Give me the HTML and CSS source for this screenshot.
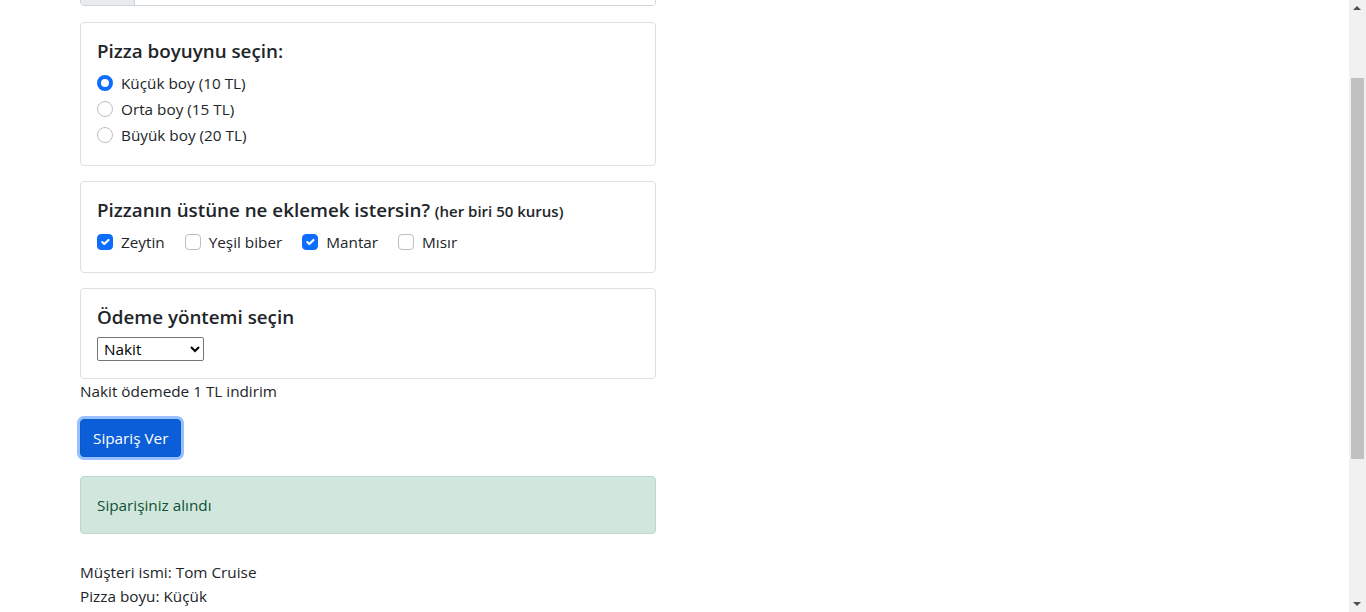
FILE: index.html
```html
<!DOCTYPE html>
<html lang="tr">
<head>
<meta charset="utf-8">
<title>Pizza Siparişi</title>
<link rel="stylesheet" href="styles.css">
</head>
<body>
<div class="page">
  <div class="input-group">
    <span class="addon">İsim</span>
    <input class="text-input" type="text" value="">
  </div>

  <div class="card">
    <h5 class="card-title">Pizza boyuynu seçin:</h5>
    <div class="form-check">
      <span class="radio checked"></span><label>Küçük boy (10 TL)</label>
    </div>
    <div class="form-check">
      <span class="radio"></span><label>Orta boy (15 TL)</label>
    </div>
    <div class="form-check">
      <span class="radio"></span><label>Büyük boy (20 TL)</label>
    </div>
  </div>

  <div class="card">
    <h5 class="card-title">Pizzanın üstüne ne eklemek istersin? <small>(her biri 50 kurus)</small></h5>
    <div class="checks">
      <div class="form-check inline"><span class="checkbox checked"><svg viewBox="0 0 20 20" width="16" height="16"><path d="M6 10l3 3l6-6" fill="none" stroke="#fff" stroke-width="3" stroke-linecap="round" stroke-linejoin="round"/></svg></span><label>Zeytin</label></div>
      <div class="form-check inline"><span class="checkbox"></span><label>Yeşil biber</label></div>
      <div class="form-check inline"><span class="checkbox checked"><svg viewBox="0 0 20 20" width="16" height="16"><path d="M6 10l3 3l6-6" fill="none" stroke="#fff" stroke-width="3" stroke-linecap="round" stroke-linejoin="round"/></svg></span><label>Mantar</label></div>
      <div class="form-check inline"><span class="checkbox"></span><label>Mısır</label></div>
    </div>
  </div>

  <div class="card card-last">
    <h5 class="card-title">Ödeme yöntemi seçin</h5>
    <select class="pay-select">
      <option>Nakit</option>
      <option>Kredi kartı</option>
    </select>
  </div>
  <p class="note">Nakit ödemede 1 TL indirim</p>

  <button class="btn" type="button">Sipariş Ver</button>

  <div class="alert">Siparişiniz alındı</div>

  <div class="summary">
    <p>Müşteri ismi: Tom Cruise</p>
    <p>Pizza boyu: Küçük</p>
  </div>
</div>

<div class="scrollbar">
  <div class="arrow up"></div>
  <div class="thumb"></div>
  <div class="arrow down"></div>
</div>
</body>
</html>
```
FILE: styles.css
```css
* { box-sizing: border-box; }
html, body { margin: 0; padding: 0; background: #fff; overflow: hidden; }
body {
  font-family: "Open Sans", "Noto Sans", sans-serif;
  font-size: 15.3px;
  line-height: 24px;
  color: #212529;
}
.page {
  width: 656px;
  padding-left: 80px;
}
.input-group {
  display: flex;
  height: 38px;
  margin-top: -32px;
  margin-bottom: 16px;
  border: 1px solid #ced4da;
  border-radius: 4px;
  overflow: hidden;
}
.addon {
  width: 54px;
  background: #e9ecef;
  border-right: 1px solid #ced4da;
  padding: 6px 12px;
}
.text-input { flex: 1; border: 0; outline: none; font: inherit; }
.card {
  border: 1px solid #dfdfdf;
  border-radius: 4px;
  padding: 16px;
  margin-bottom: 15px;
}
.card-last { margin-bottom: 0; padding-bottom: 17px; }
.card-title {
  margin: 0 0 8px;
  font-size: 18.8px;
  line-height: 24px;
  font-weight: 600;
}
.card-title small { font-size: 15px; font-weight: 600; line-height: 0; }
.form-check {
  display: flex;
  align-items: center;
  height: 24px;
  margin-bottom: 2px;
}
.form-check label { margin-left: 8px; }
.checks { display: flex; }
.form-check.inline { margin-right: 20px; }
.radio, .checkbox {
  width: 16px;
  height: 16px;
  flex: none;
  border: 1px solid #bfbfbf;
  background: #fff;
  display: flex;
  align-items: center;
  justify-content: center;
}
.radio { border-radius: 50%; }
.radio.checked { border: 4.5px solid #0d6efd; }
.checkbox { border-radius: 4px; }
.checkbox.checked { background: #0d6efd; border-color: #0d6efd; }
.checkbox svg { display: block; }
.pay-select {
  display: block;
  width: 107px;
  height: 24px;
  font: inherit;
  font-size: 15.3px;
  color: #000;
  border: 1px solid #767676;
  border-radius: 2px;
  background: #fff;
  padding: 0 2px;
}
.note { margin: 0; }
.btn {
  margin-top: 16px;
  display: block;
  font: inherit;
  color: #fff;
  background: #0b5ed7;
  border: 1px solid #0a58ca;
  border-radius: 4px;
  padding: 6px 12px;
  height: 38px;
  box-shadow: 0 0 0 3px rgba(80, 152, 253, 0.6);
}
.alert {
  margin-top: 19px;
  background: #d1e7dd;
  border: 1px solid #badbcc;
  color: #0f5132;
  border-radius: 4px;
  padding: 16px;
}
.summary { margin-top: 26px; }
.summary p { margin: 0; }
.scrollbar {
  position: fixed;
  top: 0;
  right: 0;
  width: 17px;
  height: 100%;
  background: #f1f1f1;
}
.thumb {
  position: absolute;
  left: 2px;
  width: 13px;
  top: 78px;
  height: 381px;
  background: #c1c1c1;
}
.arrow {
  position: absolute;
  left: 4px;
  width: 0;
  height: 0;
  border-left: 4px solid transparent;
  border-right: 4px solid transparent;
}
.arrow.up { top: 6px; border-bottom: 4px solid #505050; }
.arrow.down { bottom: 6px; border-top: 4px solid #505050; }
```
